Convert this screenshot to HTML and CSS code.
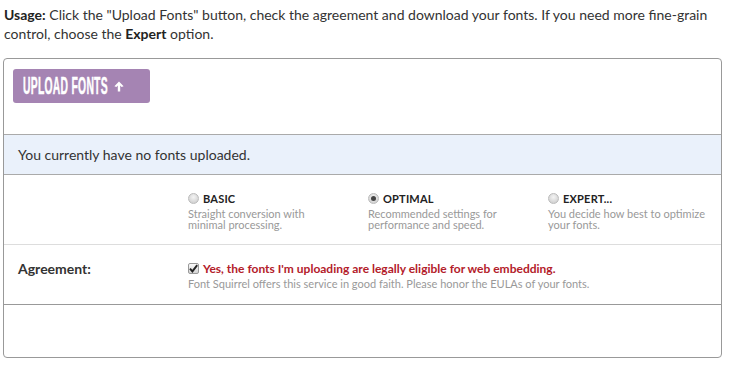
FILE: index.html
```html
<!doctype html>
<html lang="en">

<head>
    <meta charset="utf-8">
    <title>Webfont Generator</title>
    <link rel="stylesheet" href="styles.css">
</head>

<body>
    <p class="usage"><b>Usage:</b> Click the "Upload Fonts" button, check the agreement and download your fonts. If you need more fine-grain control, choose the <b>Expert</b> option.</p>

    <div class="panel">
        <div class="upload-row">
            <button class="upload-button"><span class="upload-text">UPLOAD FONTS</span>
                <svg class="upload-arrow" width="10" height="11" viewBox="0 0 10 11">
                    <path d="M5 0.5 L9.6 5.3 L7.6 6 L6.2 4.6 L6.2 10.5 L3.8 10.5 L3.8 4.6 L2.4 6 L0.4 5.3 Z" fill="#fff"/>
                </svg>
            </button>
        </div>

        <div class="status-row">You currently have no fonts uploaded.</div>

        <div class="form-row options-row">
            <div class="row-label"></div>
            <div class="option-list">
                <div class="option">
                    <div class="option-head"><span class="radio"></span><span class="option-name">BASIC</span></div>
                    <div class="option-desc">Straight conversion with minimal processing.</div>
                </div>
                <div class="option">
                    <div class="option-head"><span class="radio checked"></span><span class="option-name">OPTIMAL</span></div>
                    <div class="option-desc">Recommended settings for performance and speed.</div>
                </div>
                <div class="option">
                    <div class="option-head"><span class="radio"></span><span class="option-name">EXPERT...</span></div>
                    <div class="option-desc">You decide how best to optimize your fonts.</div>
                </div>
            </div>
        </div>

        <div class="form-row agreement-row">
            <div class="row-label">Agreement:</div>
            <div class="agreement">
                <div class="agree-line">
                    <span class="checkbox">
                        <svg width="9" height="9" viewBox="0 0 9 9">
                            <path d="M1 4.6 L3.4 7.4 L8.2 1.2" fill="none" stroke="#222" stroke-width="1.9"/>
                        </svg>
                    </span>
                    <span class="agree-text">Yes, the fonts I'm uploading are legally eligible for web embedding.</span>
                </div>
                <div class="agree-note">Font Squirrel offers this service in good faith. Please honor the EULAs of your fonts.</div>
            </div>
        </div>

        <div class="footer-row"></div>
    </div>
</body>
</html>
```

FILE: styles.css
```css
body {
    margin: 0;
    padding: 0 4px;
    font-family: Lato, "Open Sans", sans-serif;
    color: #333;
    background: #fff;
}
.usage {
    margin: 0;
    padding-top: 5px;
    font-size: 14px;
    line-height: 19px;
    width: 725px;
}
.usage b {
    color: #222;
}
.panel {
    margin: 15px 0 0 -1px;
    width: 717px;
    height: 298px;
    border: 1px solid #999;
    border-radius: 4px;
    display: flex;
    flex-direction: column;
}
.upload-row {
    height: 76px;
    padding: 10px 9px 0;
    box-sizing: border-box;
    border-bottom: 1px solid #aaa;
}
.upload-button {
    height: 34px;
    width: 137px;
    padding: 0 0 0 10px;
    border: 0;
    border-radius: 3px;
    background-color: #a584b3;
    display: flex;
    align-items: center;
    cursor: pointer;
}
.upload-text {
    display: inline-block;
    font-family: "Liberation Sans", Arial, sans-serif;
    font-weight: bold;
    font-size: 23px;
    color: #fff;
    -webkit-text-stroke: 0.5px #fff;
    transform: scaleX(0.45);
    transform-origin: left center;
    width: 88px;
    white-space: nowrap;
    letter-spacing: 0.6px;
    margin-top: 1px;
}
.upload-arrow {
    margin-left: 3px;
}
.status-row {
    height: 40px;
    box-sizing: border-box;
    border-bottom: 1px solid #aaa;
    background-color: #eaf1fb;
    font-size: 14px;
    line-height: 39px;
    padding-left: 14px;
    color: #333;
}
.form-row {
    display: flex;
    box-sizing: border-box;
}
.row-label {
    flex: 0 0 184px;
    padding-left: 14px;
    box-sizing: border-box;
    font-size: 14px;
    font-weight: bold;
    color: #333;
}
.options-row {
    height: 70px;
    border-bottom: 1px solid #ddd;
    padding-top: 16px;
}
.option-list {
    display: flex;
    flex: 1;
}
.option {
    flex: 0 0 180px;
}
.option:last-child {
    flex: 1 1 auto;
}
.option-head {
    display: flex;
    align-items: center;
    height: 14px;
}
.radio {
    width: 11px;
    height: 11px;
    border-radius: 50%;
    box-sizing: border-box;
    border: 1px solid #bbb;
    background: radial-gradient(circle at 50% 35%, #f4f4f4, #c8c8c8);
    margin-right: 4px;
    position: relative;
}
.radio.checked::after {
    content: "";
    position: absolute;
    left: 2px;
    top: 2px;
    width: 5px;
    height: 5px;
    border-radius: 50%;
    background: #444;
}
.option-name {
    font-size: 11px;
    font-weight: bold;
    color: #222;
    letter-spacing: 0.2px;
}
.option-desc {
    font-size: 11px;
    line-height: 11px;
    color: #999;
    margin-top: 3px;
    width: 130px;
}
.option:last-child .option-desc {
    width: 170px;
}
.agreement-row {
    height: 60px;
    border-bottom: 1px solid #999;
    padding-top: 16px;
}
.agreement-row .row-label {
    line-height: 16px;
}
.agree-line {
    display: flex;
    align-items: center;
    height: 14px;
}
.checkbox {
    width: 11px;
    height: 11px;
    box-sizing: border-box;
    border: 1px solid #999;
    border-radius: 2px;
    background: linear-gradient(#fafafa, #d4d4d4);
    margin-right: 4px;
    display: flex;
    align-items: center;
    justify-content: center;
}
.agree-text {
    font-size: 12px;
    font-weight: bold;
    color: #b3202a;
}
.agree-note {
    font-size: 11px;
    color: #999;
    margin-top: 2px;
}
.footer-row {
    flex: 1;
}
```
